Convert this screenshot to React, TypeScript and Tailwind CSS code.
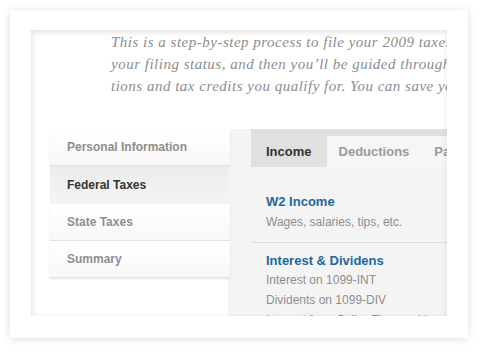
import React from "react";

const sans = { fontFamily: '"Liberation Sans", Arial, sans-serif' };
const serif = { fontFamily: '"Liberation Serif", "Times New Roman", serif' };

export default function App() {
  const nav = [
    { label: "Personal Information", active: false },
    { label: "Federal Taxes", active: true },
    { label: "State Taxes", active: false },
    { label: "Summary", active: false },
  ];
  return (
    <div className="w-[481px] h-[359px] bg-white pt-[10px] pl-[10px] overflow-hidden" style={sans}>
      <div className="w-[458px] h-[328px] bg-white pt-[20px] pl-[21px] pr-[21px] pb-[22px] shadow-[0_1px_8px_rgba(0,0,0,0.13)]">
        <div className="relative w-full h-full overflow-hidden bg-white">
          <div className="pl-[80px] pt-[1px] text-[15px] leading-[22px] tracking-[0.5px] italic text-[#8d8d8d] whitespace-nowrap" style={serif}>
            <div>This is a step-by-step process to file your 2009 taxes. First</div>
            <div>your filing status, and then you’ll be guided through the</div>
            <div>tions and tax credits you qualify for. You can save your</div>
          </div>
          <div className="mt-[32px] pl-[19px] flex">
            <div className="w-[180px] shrink-0 relative z-10 flex flex-col">
              {nav.map((n) =>
                n.active ? (
                  <div
                    key={n.label}
                    className="h-[38px] w-[178px] flex items-center pl-[17px] text-[12px] font-bold text-[#333] bg-gradient-to-b from-[#ececec] to-[#f4f4f4]"
                  >
                    {n.label}
                  </div>
                ) : (
                  <div
                    key={n.label}
                    className="h-[37px] flex items-center pl-[17px] text-[12px] font-bold text-[#8e8e8e] bg-gradient-to-b from-white to-[#f8f8f8] border-b border-[#e2e2e2] shadow-[0_1px_2px_rgba(0,0,0,0.1)]"
                  >
                    {n.label}
                  </div>
                )
              )}
            </div>
            <div className="w-[260px] shrink-0 -ml-[2px] pl-[23px] bg-[#f4f4f4] h-[200px] whitespace-nowrap">
              <div className="flex h-[38px] bg-[#e0e0e0] text-[13px] font-bold">
                <div className="pt-[7px] px-[15px] flex items-center text-[#333]">Income</div>
                <div className="flex-1 mt-[7px] bg-[#f6f6f6] flex items-center text-[#9a9a9a]">
                  <div className="pl-[12px] pr-[25px]">Deductions</div>
                  <div>Payments</div>
                </div>
              </div>
              <div className="pt-[26px] pb-[10px] pl-[15px] border-b border-[#dedede]">
                <div className="text-[13px] leading-[18px] font-bold text-[#22679d]">W2 Income</div>
                <div className="mt-[1px] text-[12px] leading-[20px] text-[#8e8e8e]">Wages, salaries, tips, etc.</div>
              </div>
              <div className="pt-[9px] pl-[15px]">
                <div className="text-[13px] leading-[18px] font-bold text-[#22679d]">Interest &amp; Dividens</div>
                <div className="text-[12px] leading-[20px] text-[#8e8e8e]">Interest on 1099-INT</div>
                <div className="text-[12px] leading-[20px] text-[#8e8e8e]">Dividents on 1099-DIV</div>
                <div className="text-[12px] leading-[20px] text-[#8e8e8e]">Interest from Seller-Financed Loans</div>
              </div>
            </div>
          </div>
          <div className="pointer-events-none absolute inset-0 shadow-[inset_1px_2px_6px_rgba(0,0,0,0.13)]" />
        </div>
      </div>
    </div>
  );
}
